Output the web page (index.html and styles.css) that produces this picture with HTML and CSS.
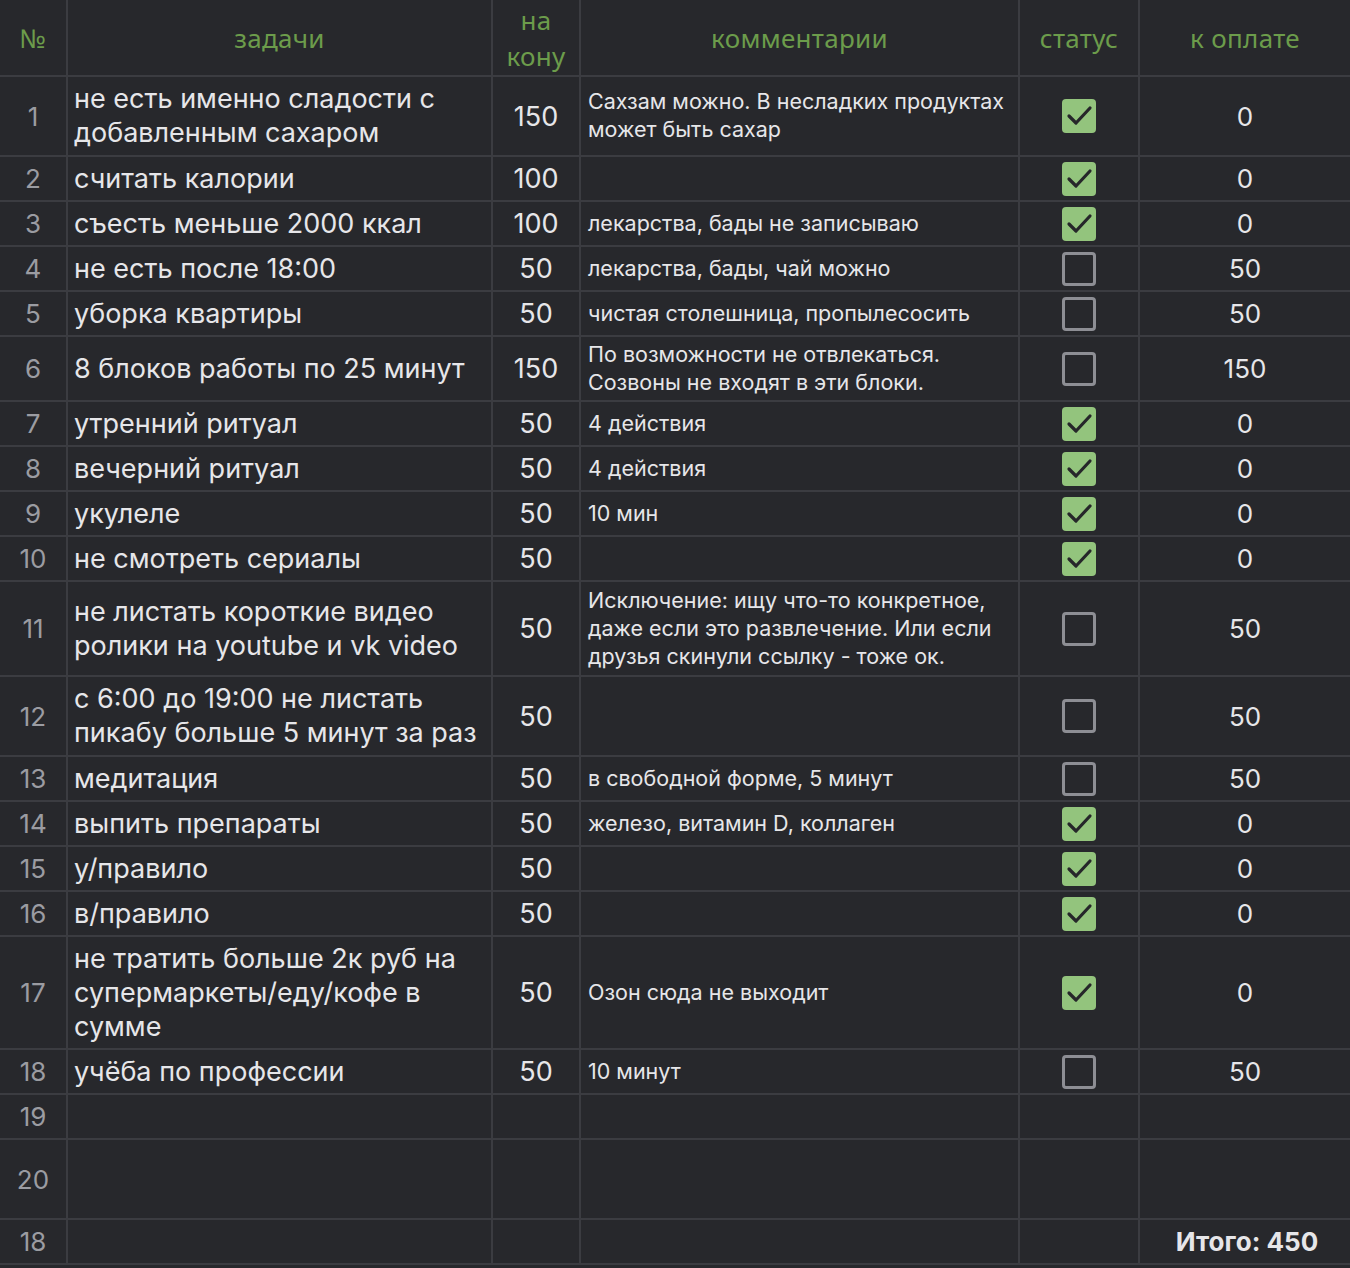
FILE: index.html
```html
<!DOCTYPE html>
<html lang="ru">
<head>
<meta charset="utf-8">
<title>Задачи</title>
<link rel="stylesheet" href="styles.css">
</head>
<body>
<div class="sheet">
  <div class="cell head">№</div>
  <div class="cell head">задачи</div>
  <div class="cell head">на<br>кону</div>
  <div class="cell head">комментарии</div>
  <div class="cell head">статус</div>
  <div class="cell head">к оплате</div>

  <div class="cell num">1</div>
  <div class="cell task">не есть именно сладости с добавленным сахаром</div>
  <div class="cell bet">150</div>
  <div class="cell note">Сахзам можно. В несладких продуктах может быть сахар</div>
  <div class="cell status"><span class="box on"><svg viewBox="0 0 34 34"><path d="M7 17 L14 24 L28 9"/></svg></span></div>
  <div class="cell pay">0</div>

  <div class="cell num">2</div>
  <div class="cell task">считать калории</div>
  <div class="cell bet">100</div>
  <div class="cell note"></div>
  <div class="cell status"><span class="box on"><svg viewBox="0 0 34 34"><path d="M7 17 L14 24 L28 9"/></svg></span></div>
  <div class="cell pay">0</div>

  <div class="cell num">3</div>
  <div class="cell task">съесть меньше 2000 ккал</div>
  <div class="cell bet">100</div>
  <div class="cell note">лекарства, бады не записываю</div>
  <div class="cell status"><span class="box on"><svg viewBox="0 0 34 34"><path d="M7 17 L14 24 L28 9"/></svg></span></div>
  <div class="cell pay">0</div>

  <div class="cell num">4</div>
  <div class="cell task">не есть после 18:00</div>
  <div class="cell bet">50</div>
  <div class="cell note">лекарства, бады, чай можно</div>
  <div class="cell status"><span class="box"></span></div>
  <div class="cell pay">50</div>

  <div class="cell num">5</div>
  <div class="cell task">уборка квартиры</div>
  <div class="cell bet">50</div>
  <div class="cell note">чистая столешница, пропылесосить</div>
  <div class="cell status"><span class="box"></span></div>
  <div class="cell pay">50</div>

  <div class="cell num">6</div>
  <div class="cell task">8 блоков работы по 25 минут</div>
  <div class="cell bet">150</div>
  <div class="cell note">По возможности не отвлекаться. Созвоны не входят в эти блоки.</div>
  <div class="cell status"><span class="box"></span></div>
  <div class="cell pay">150</div>

  <div class="cell num">7</div>
  <div class="cell task">утренний ритуал</div>
  <div class="cell bet">50</div>
  <div class="cell note">4 действия</div>
  <div class="cell status"><span class="box on"><svg viewBox="0 0 34 34"><path d="M7 17 L14 24 L28 9"/></svg></span></div>
  <div class="cell pay">0</div>

  <div class="cell num">8</div>
  <div class="cell task">вечерний ритуал</div>
  <div class="cell bet">50</div>
  <div class="cell note">4 действия</div>
  <div class="cell status"><span class="box on"><svg viewBox="0 0 34 34"><path d="M7 17 L14 24 L28 9"/></svg></span></div>
  <div class="cell pay">0</div>

  <div class="cell num">9</div>
  <div class="cell task">укулеле</div>
  <div class="cell bet">50</div>
  <div class="cell note">10 мин</div>
  <div class="cell status"><span class="box on"><svg viewBox="0 0 34 34"><path d="M7 17 L14 24 L28 9"/></svg></span></div>
  <div class="cell pay">0</div>

  <div class="cell num">10</div>
  <div class="cell task">не смотреть сериалы</div>
  <div class="cell bet">50</div>
  <div class="cell note"></div>
  <div class="cell status"><span class="box on"><svg viewBox="0 0 34 34"><path d="M7 17 L14 24 L28 9"/></svg></span></div>
  <div class="cell pay">0</div>

  <div class="cell num">11</div>
  <div class="cell task">не листать короткие видео ролики на youtube и vk video</div>
  <div class="cell bet">50</div>
  <div class="cell note">Исключение: ищу что-то конкретное, даже если это развлечение. Или если друзья скинули ссылку - тоже ок.</div>
  <div class="cell status"><span class="box"></span></div>
  <div class="cell pay">50</div>

  <div class="cell num">12</div>
  <div class="cell task">с 6:00 до 19:00 не листать пикабу больше 5 минут за раз</div>
  <div class="cell bet">50</div>
  <div class="cell note"></div>
  <div class="cell status"><span class="box"></span></div>
  <div class="cell pay">50</div>

  <div class="cell num">13</div>
  <div class="cell task">медитация</div>
  <div class="cell bet">50</div>
  <div class="cell note">в свободной форме, 5 минут</div>
  <div class="cell status"><span class="box"></span></div>
  <div class="cell pay">50</div>

  <div class="cell num">14</div>
  <div class="cell task">выпить препараты</div>
  <div class="cell bet">50</div>
  <div class="cell note">железо, витамин D, коллаген</div>
  <div class="cell status"><span class="box on"><svg viewBox="0 0 34 34"><path d="M7 17 L14 24 L28 9"/></svg></span></div>
  <div class="cell pay">0</div>

  <div class="cell num">15</div>
  <div class="cell task">у/правило</div>
  <div class="cell bet">50</div>
  <div class="cell note"></div>
  <div class="cell status"><span class="box on"><svg viewBox="0 0 34 34"><path d="M7 17 L14 24 L28 9"/></svg></span></div>
  <div class="cell pay">0</div>

  <div class="cell num">16</div>
  <div class="cell task">в/правило</div>
  <div class="cell bet">50</div>
  <div class="cell note"></div>
  <div class="cell status"><span class="box on"><svg viewBox="0 0 34 34"><path d="M7 17 L14 24 L28 9"/></svg></span></div>
  <div class="cell pay">0</div>

  <div class="cell num">17</div>
  <div class="cell task">не тратить больше 2к руб на супермаркеты/еду/кофе в сумме</div>
  <div class="cell bet">50</div>
  <div class="cell note">Озон сюда не выходит</div>
  <div class="cell status"><span class="box on"><svg viewBox="0 0 34 34"><path d="M7 17 L14 24 L28 9"/></svg></span></div>
  <div class="cell pay">0</div>

  <div class="cell num">18</div>
  <div class="cell task">учёба по профессии</div>
  <div class="cell bet">50</div>
  <div class="cell note">10 минут</div>
  <div class="cell status"><span class="box"></span></div>
  <div class="cell pay">50</div>

  <div class="cell num">19</div>
  <div class="cell task"></div>
  <div class="cell bet"></div>
  <div class="cell note"></div>
  <div class="cell status"></div>
  <div class="cell pay"></div>

  <div class="cell num">20</div>
  <div class="cell task"></div>
  <div class="cell bet"></div>
  <div class="cell note"></div>
  <div class="cell status"></div>
  <div class="cell pay"></div>

  <div class="cell num">18</div>
  <div class="cell task"></div>
  <div class="cell bet"></div>
  <div class="cell note"></div>
  <div class="cell status"></div>
  <div class="cell pay total">Итого: 450</div>
</div>
</body>
</html>
```

FILE: styles.css
```css
html, body {
  margin: 0;
  padding: 0;
  background: #27282c;
}

body {
  font-family: Inter, Roboto, "Liberation Sans", sans-serif;
  color: #e6e6e9;
}

.sheet {
  display: grid;
  grid-template-columns: 66px 423px 86px 437px 118px 210px;
  grid-template-rows: 75px 78px 43px 43px 43px 43px 63px 43px 43px 43px 43px 93px 78px 43px 43px 43px 43px 111px 43px 43px 78px 43px;
  gap: 2px;
  padding-bottom: 2px;
  background: #3b3c41;
  width: 1350px;
}

.cell {
  background: #27282c;
  display: flex;
  align-items: center;
  box-sizing: border-box;
  min-width: 0;
}

.head {
  justify-content: center;
  text-align: center;
  color: #6c9c4b;
  font-family: "Noto Sans", "Open Sans", sans-serif;
  font-size: 26px;
  line-height: 36px;
  letter-spacing: 0.3px;
}

.num {
  justify-content: center;
  color: #9b9ca2;
  font-size: 26px;
}

.task {
  padding: 0 6px;
  font-size: 27px;
  line-height: 34px;
}

.bet {
  justify-content: center;
  font-size: 27px;
}

.note {
  padding: 0 7px 2px;
  font-size: 21.5px;
  line-height: 28px;
}

.status {
  justify-content: center;
}

.pay {
  justify-content: center;
  font-size: 26px;
}

.total {
  font-weight: 700;
  padding-left: 4px;
}

.box {
  width: 34px;
  height: 34px;
  box-sizing: border-box;
  border: 3px solid #8d8e94;
  border-radius: 4px;
  display: block;
}

.box.on {
  background: #93c47d;
  border: none;
}

.box svg {
  width: 34px;
  height: 34px;
  display: block;
}

.box path {
  fill: none;
  stroke: #26272a;
  stroke-width: 3.2;
  stroke-linecap: round;
  stroke-linejoin: round;
}
```
